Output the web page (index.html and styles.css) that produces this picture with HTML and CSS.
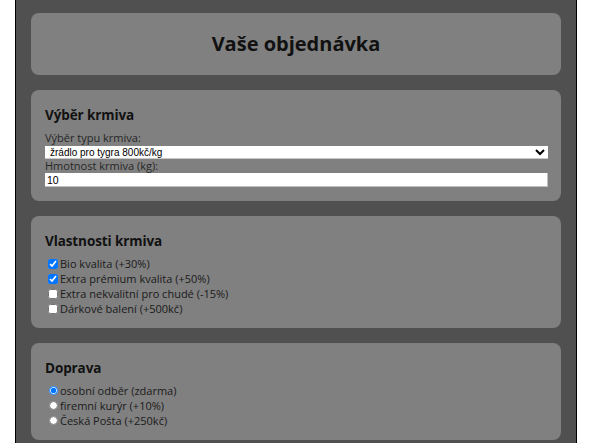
FILE: index.html
```html
<!DOCTYPE html>
<html lang="cs">
<head>
<meta charset="utf-8">
<title>Vaše objednávka</title>
<link rel="stylesheet" href="styles.css">
</head>
<body>
<div class="page">
  <div class="card title-card">
    <h1 class="title">Vaše objednávka</h1>
  </div>

  <div class="card">
    <h2 class="card-heading">Výběr krmiva</h2>
    <label class="field-label" for="typ">Výběr typu krmiva:</label>
    <select class="field-select" id="typ">
      <option>žrádlo pro tygra 800kč/kg</option>
    </select>
    <label class="field-label" for="hmotnost">Hmotnost krmiva (kg):</label>
    <input class="field-input" id="hmotnost" type="text" value="10">
  </div>

  <div class="card card-options">
    <h2 class="card-heading">Vlastnosti krmiva</h2>
    <div class="options">
      <label class="option"><input class="check" type="checkbox" checked>Bio kvalita (+30%)</label>
      <label class="option"><input class="check" type="checkbox" checked>Extra prémium kvalita (+50%)</label>
      <label class="option"><input class="check" type="checkbox">Extra nekvalitní pro chudé (-15%)</label>
      <label class="option"><input class="check" type="checkbox">Dárkové balení (+500kč)</label>
    </div>
  </div>

  <div class="card card-options">
    <h2 class="card-heading">Doprava</h2>
    <div class="options">
      <label class="option"><input class="radio" type="radio" name="doprava" checked>osobní odběr (zdarma)</label>
      <label class="option"><input class="radio" type="radio" name="doprava">firemní kurýr (+10%)</label>
      <label class="option"><input class="radio" type="radio" name="doprava">Česká Pošta (+250kč)</label>
    </div>
  </div>
</div>
</body>
</html>
```

FILE: styles.css
```css
html, body {
  margin: 0;
  padding: 0;
  background: #ffffff;
  height: 100%;
}

body {
  font-family: "Open Sans", "Noto Sans", sans-serif;
  color: #141414;
  overflow: hidden;
}

.page {
  box-sizing: border-box;
  width: 562px;
  min-height: 100%;
  margin: 0 14px 0 15px;
  border-left: 1px solid #000;
  border-right: 1px solid #000;
  background: #505050;
  padding: 13px 15px 20px;
  display: flex;
  flex-direction: column;
  gap: 15px;
}

.card {
  background: #808080;
  border-radius: 8px;
  padding: 15px 14px 14px;
  display: flex;
  flex-direction: column;
}

.card-options {
  padding-bottom: 12px;
}

.title-card {
  height: 62px;
  box-sizing: border-box;
  padding: 0;
  align-items: center;
  justify-content: center;
}

.title {
  margin: 0;
  font-size: 20px;
  font-weight: 700;
  line-height: 26px;
  color: #111;
}

.card-heading {
  margin: 0 0 6px;
  font-size: 13.5px;
  letter-spacing: -0.1px;
  font-weight: 700;
  line-height: 20px;
  color: #111;
}

.field-label {
  font-size: 11px;
  line-height: 14.5px;
  color: #262626;
}

.field-select {
  box-sizing: border-box;
  height: 13px;
  width: 503px;
  margin: 0;
  padding: 0 0 0 1px;
  border: 0;
  border-bottom: 1px solid #c8c8c8;
  background: #fff;
  font-family: "Liberation Sans", Arial, sans-serif;
  font-size: 10px;
  line-height: 12px;
  color: #000;
  border-radius: 0;
}

.field-input {
  box-sizing: border-box;
  height: 14px;
  width: 503px;
  margin: 0;
  padding: 0 0 0 2px;
  border: 0;
  border-right: 1px solid #c0c0c0;
  border-bottom: 1px solid #c0c0c0;
  background: #fff;
  font-family: "Liberation Sans", Arial, sans-serif;
  font-size: 10.5px;
  color: #000;
  border-radius: 0;
}

.options {
  display: flex;
  flex-direction: column;
  margin-top: -1px;
}

.option {
  display: flex;
  align-items: center;
  height: 15px;
  font-size: 11px;
  line-height: 15px;
  color: #1a1a1a;
}

.check {
  width: 10px;
  height: 10px;
  margin: 0 2px 0 3px;
}

.radio {
  width: 9px;
  height: 9px;
  margin: 0 2px 0 4px;
}
```
